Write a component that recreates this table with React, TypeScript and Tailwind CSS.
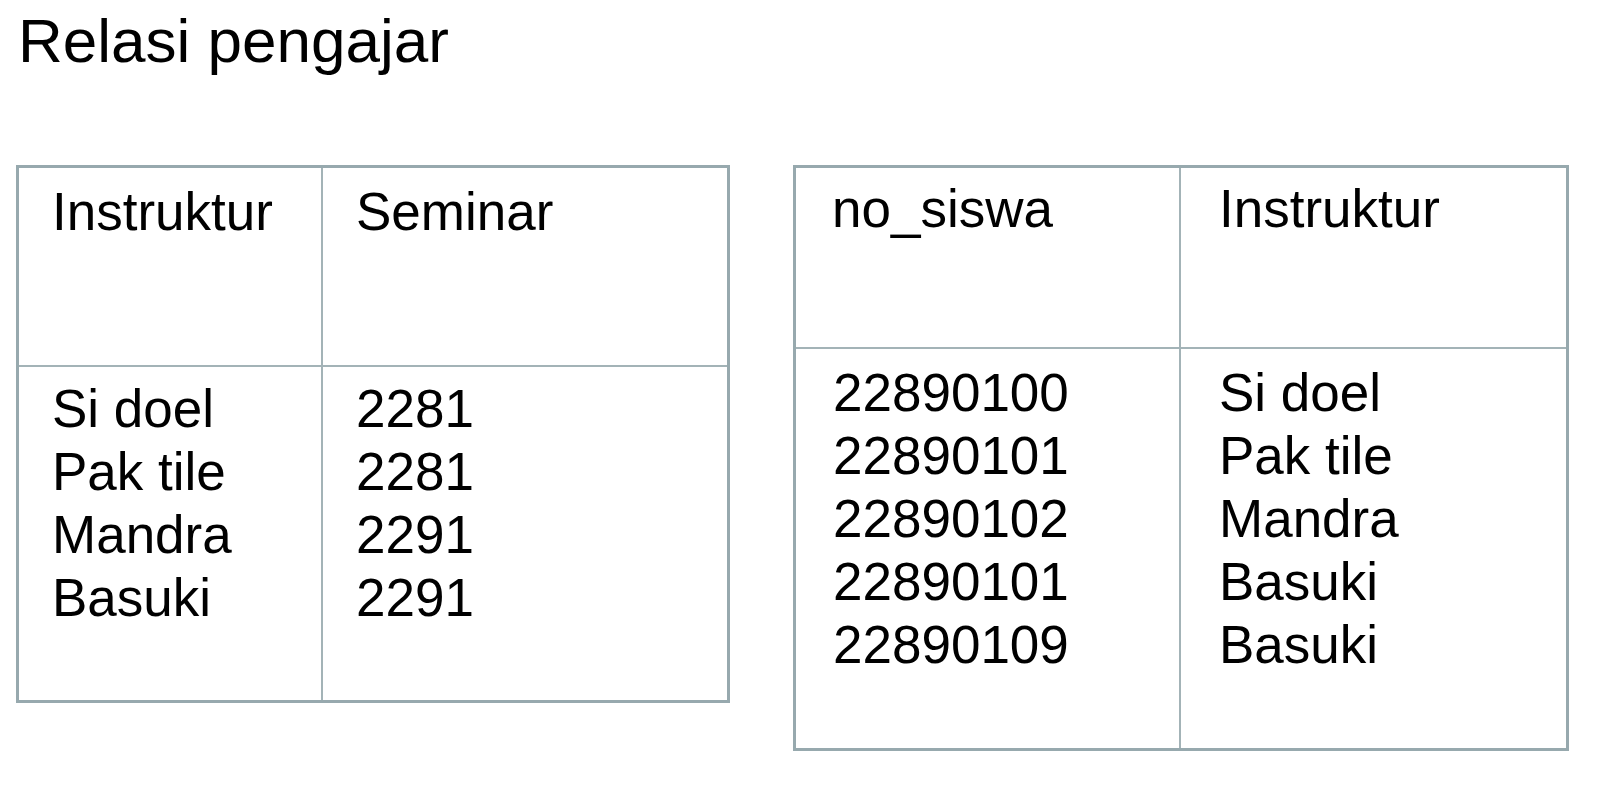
const font = { fontFamily: '"Liberation Sans", Arial, sans-serif' };

const leftRows = [
  ["Si doel", "2281"],
  ["Pak tile", "2281"],
  ["Mandra", "2291"],
  ["Basuki", "2291"],
];

const rightRows = [
  ["22890100", "Si doel"],
  ["22890101", "Pak tile"],
  ["22890102", "Mandra"],
  ["22890101", "Basuki"],
  ["22890109", "Basuki"],
];

export default function App() {
  return (
    <div
      className="w-[1600px] h-[789px] bg-white text-black pt-[10px] overflow-hidden"
      style={font}
    >
      {/* Judul */}
      <h1 className="pl-[18px] text-[62px] leading-[62px] font-normal">Relasi pengajar</h1>

      <div className="flex items-start gap-[63px] pl-[16px] mt-[93px] text-[53px] leading-[63px]">
        {/* Tabel kiri */}
        <div className="w-[714px] h-[538px] border-[3px] border-[#97a9ae] grid grid-cols-[304px_1fr] grid-rows-[199px_1fr]">
          <div className="border-r-2 border-b-2 border-[#a3b3b7] pl-[33px] pt-[12px]">Instruktur</div>
          <div className="border-b-2 border-[#a3b3b7] pl-[33px] pt-[12px]">Seminar</div>
          <div className="border-r-2 border-[#a3b3b7] pl-[33px] pt-[10px]">
            {leftRows.map((r, i) => (
              <div key={i}>{r[0]}</div>
            ))}
          </div>
          <div className="pl-[33px] pt-[10px]">
            {leftRows.map((r, i) => (
              <div key={i}>{r[1]}</div>
            ))}
          </div>
        </div>

        {/* Tabel kanan */}
        <div className="w-[776px] h-[586px] border-[3px] border-[#97a9ae] grid grid-cols-[385px_1fr] grid-rows-[181px_1fr]">
          <div className="border-r-2 border-b-2 border-[#a3b3b7] pl-[36px] pt-[9px]">no_siswa</div>
          <div className="border-b-2 border-[#a3b3b7] pl-[38px] pt-[9px]">Instruktur</div>
          <div className="border-r-2 border-[#a3b3b7] pl-[37px] pt-[12px]">
            {rightRows.map((r, i) => (
              <div key={i}>{r[0]}</div>
            ))}
          </div>
          <div className="pl-[38px] pt-[12px]">
            {rightRows.map((r, i) => (
              <div key={i}>{r[1]}</div>
            ))}
          </div>
        </div>
      </div>
    </div>
  );
}
